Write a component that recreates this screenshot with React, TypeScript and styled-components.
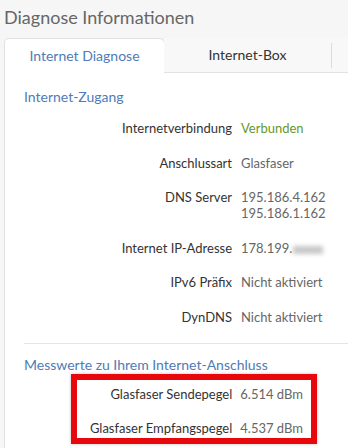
import { Fragment } from 'react'
import { styled, createGlobalStyle } from 'styled-components'

const GlobalStyle = createGlobalStyle`
  * { box-sizing: border-box; }
  html, body {
    margin: 0;
    padding: 0;
    background: #f6f6f6;
    font-family: Lato, 'Liberation Sans', sans-serif;
  }
`

const blau = '#4f7bb6'

const Seite = styled.div`
  width: 348px;
  height: 448px;
  overflow: hidden;
  padding-left: 4px;
`

const Titel = styled.h1`
  margin: 0;
  padding-top: 5px;
  height: 38px;
  font-size: 18px;
  line-height: 24px;
  font-weight: normal;
  color: #666;
`

const TabLeiste = styled.div`
  display: flex;
  height: 35px;
`

const Tab = styled.div<{ aktiv?: boolean }>`
  width: ${(p) => (p.aktiv ? '160px' : 'auto')};
  flex: ${(p) => (p.aktiv ? 'none' : '1')};
  display: flex;
  align-items: center;
  justify-content: center;
  font-size: 14px;
  padding-bottom: 1px;
  color: ${(p) => (p.aktiv ? blau : '#333')};
  background: ${(p) => (p.aktiv ? '#fff' : '#f8f8f8')};
  border-left: ${(p) => (p.aktiv ? '1px solid #e2e2e2' : 'none')};
  border-top: ${(p) => (p.aktiv ? '1px solid #e2e2e2' : 'none')};
  border-bottom: ${(p) => (p.aktiv ? 'none' : '1px solid #e2e2e2')};
  border-radius: ${(p) => (p.aktiv ? '5px 5px 0 0' : '0')};
  box-shadow: ${(p) => (p.aktiv ? '1px 0 0 #e6e6e6' : 'none')};
`

const TabText = styled.span`
  flex: 1;
  text-align: center;
`

const Trenner = styled.span`
  width: 1px;
  height: 25px;
  background: #dcdcdc;
  margin-right: 16px;
  margin-top: 2px;
`

const Panel = styled.div`
  background: #fff;
  border-left: 1px solid #e2e2e2;
  padding: 14px 0 20px 19px;
`

const Ueberschrift = styled.h2`
  margin: 0;
  font-size: 14px;
  line-height: 20px;
  font-weight: normal;
  color: ${blau};
`

const Abschnitt = styled.div`
  margin-top: 4px;
  padding-bottom: 9px;
  border-bottom: 1px solid #e4e4e4;
  margin-bottom: 11px;
`

const Zeile = styled.div`
  display: grid;
  grid-template-columns: 208px 1fr;
  column-gap: 9px;
  padding: 9px 0 9.5px;
  font-size: 13px;
  line-height: 16px;
`

const Bezeichnung = styled.div`
  text-align: right;
  color: #333;
  white-space: nowrap;
`

const Wert = styled.div<{ ok?: boolean }>`
  color: ${(p) => (p.ok ? '#67982a' : '#666')};
  white-space: nowrap;
`

const Verpixelt = styled.span`
  display: inline-block;
  width: 30px;
  height: 8px;
  margin-left: 1px;
  vertical-align: -1px;
  background: #c8c8c8;
  filter: blur(2px);
`

const Markierung = styled.div`
  margin: -1px 0 0 47px;
  width: 246px;
  border: 6px solid #e8080c;
  box-shadow: 0 0 3px rgba(0, 0, 0, 0.25);
  padding: 6px 8px 2px 0;
  display: grid;
  grid-template-columns: auto auto;
  justify-content: end;
  column-gap: 8px;
  row-gap: 18px;
  font-size: 13px;
  line-height: 16px;
`

const zugang = [
  { label: 'Internetverbindung', wert: 'Verbunden', ok: true },
  { label: 'Anschlussart', wert: 'Glasfaser' },
  { label: 'DNS Server', wert: '195.186.4.162\n195.186.1.162' },
  { label: 'Internet IP-Adresse', wert: '178.199.', blur: true },
  { label: 'IPv6 Präfix', wert: 'Nicht aktiviert' },
  { label: 'DynDNS', wert: 'Nicht aktiviert' },
]

const messwerte = [
  { label: 'Glasfaser Sendepegel', wert: '6.514 dBm' },
  { label: 'Glasfaser Empfangspegel', wert: '4.537 dBm' },
]

const App = () => {
  return (
    <Seite>
      <GlobalStyle />
      <Titel>Diagnose Informationen</Titel>
      <TabLeiste>
        <Tab aktiv>Internet Diagnose</Tab>
        <Tab>
          <TabText>Internet-Box</TabText>
          <Trenner />
        </Tab>
      </TabLeiste>
      <Panel>
        <Ueberschrift>Internet-Zugang</Ueberschrift>
        <Abschnitt>
          {zugang.map((z) => (
            <Zeile key={z.label}>
              <Bezeichnung>{z.label}</Bezeichnung>
              <Wert ok={z.ok}>
                {z.wert.split('\n').map((t) => (
                  <div key={t}>
                    {t}
                    {z.blur && <Verpixelt />}
                  </div>
                ))}
              </Wert>
            </Zeile>
          ))}
        </Abschnitt>
        <Ueberschrift>Messwerte zu Ihrem Internet-Anschluss</Ueberschrift>
        <Markierung>
          {messwerte.map((m) => (
            <Fragment key={m.label}>
              <Bezeichnung>{m.label}</Bezeichnung>
              <Wert>{m.wert}</Wert>
            </Fragment>
          ))}
        </Markierung>
      </Panel>
    </Seite>
  )
}

export default App
